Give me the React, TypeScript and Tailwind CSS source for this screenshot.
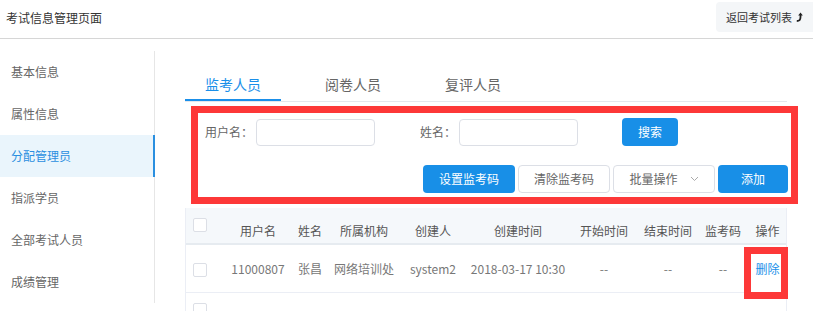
import React from "react";

const font = { fontFamily: '"Noto Sans CJK SC", "Noto Sans", sans-serif' };

const menu = ["基本信息", "属性信息", "分配管理员", "指派学员", "全部考试人员", "成绩管理"];

function Checkbox() {
  return <div className="w-[14px] h-[14px] rounded-[2px] border border-[#dcdfe6] bg-white" />;
}

const cols = "grid grid-cols-[37px_70px_34px_74px_64px_106px_66px_62px_48px_41px]";

export default function App() {
  const headers = ["用户名", "姓名", "所属机构", "创建人", "创建时间", "开始时间", "结束时间", "监考码", "操作"];
  const row = ["11000807", "张昌", "网络培训处", "system2", "2018-03-17 10:30", "--", "--", "--"];
  return (
    <div style={font} className="w-[813px] h-[311px] overflow-hidden bg-white text-[12px] relative">
      {/* header */}
      <div className="h-[39px] border-b border-[#d6d6d6] flex items-start justify-between">
        <div className="pl-[6px] pt-[10px] text-[#333] leading-[16px]">考试信息管理页面</div>
        <div className="mt-[2px] h-[30px] w-[97px] bg-[#f4f6f8] rounded-l-[4px] flex items-center pl-[10px] text-[11px] text-[#333]">
          <span>返回考试列表</span>
          <svg className="ml-[4px]" width="7" height="10" viewBox="0 0 7 10">
            <path d="M0.8 9 Q4.5 9 4.5 5 L4.5 2.5" stroke="#222" strokeWidth="1.8" fill="none" />
            <path d="M2.2 3.6 L4.5 0.6 L6.8 3.6 Z" fill="#222" />
          </svg>
        </div>
      </div>

      <div className="flex">
        {/* sidebar */}
        <div className="pt-[12px] w-[155px] shrink-0">
          <div className="border-r border-[#e6e6e6]">
            {menu.map((m, i) => (
              <div
                key={m}
                className={
                  i === 2
                    ? "h-[42px] flex items-center pl-[11px] bg-[#eaf5fc] text-[#2a8fe0] border-r-2 border-[#2a8fe0] -mr-px"
                    : "h-[42px] flex items-center pl-[11px] text-[#666]"
                }
              >
                {m}
              </div>
            ))}
          </div>
        </div>

        {/* main */}
        <div className="pl-[30px] pt-[29px] w-[632px] shrink-0">
          <div className="w-[602px] h-[34px] border-b border-[#e4e7ed] flex gap-[24px] text-[14px]">
            <div className="w-[96px] h-[33px] flex items-center justify-center text-[#1a8fe9] border-b-2 border-[#1a8fe9] pt-[2px]">监考人员</div>
            <div className="w-[96px] h-[33px] flex items-center justify-center text-[#666]">阅卷人员</div>
            <div className="w-[96px] h-[33px] flex items-center justify-center text-[#666]">复评人员</div>
          </div>

          {/* filter box */}
          <div className="mt-[4px] ml-[6px] w-[607px] h-[98px] border-[7px] border-[#fd3838] pt-[5px] pl-[7px] pr-[3px]">
            <div className="flex items-center h-[28px]">
              <span className="text-[#666] w-[51px]">用户名：</span>
              <div className="w-[119px] h-[27px] border border-[#dcdfe6] rounded-[4px]" />
              <span className="text-[#666] ml-[45px] w-[39px]">姓名：</span>
              <div className="w-[119px] h-[27px] border border-[#dcdfe6] rounded-[4px]" />
              <div className="ml-[44px] w-[56px] h-[28px] rounded-[4px] bg-[#188fe7] text-white flex items-center justify-center">搜索</div>
            </div>
            <div className="mt-[19px] flex justify-end gap-[3px]">
              <div className="w-[92px] h-[28px] rounded-[4px] bg-[#188fe7] text-white flex items-center justify-center">设置监考码</div>
              <div className="w-[92px] h-[28px] rounded-[4px] border border-[#dcdfe6] text-[#666] flex items-center justify-center">清除监考码</div>
              <div className="w-[102px] h-[28px] rounded-[4px] border border-[#dcdfe6] text-[#666] flex items-center justify-center">
                <span>批量操作</span>
                <svg className="ml-[12px]" width="9" height="6" viewBox="0 0 9 6">
                  <path d="M1 1 L4.5 4.5 L8 1" stroke="#aaa" strokeWidth="1" fill="none" />
                </svg>
              </div>
              <div className="w-[70px] h-[28px] rounded-[4px] bg-[#188fe7] text-white flex items-center justify-center">添加</div>
            </div>
          </div>

          {/* table */}
          <div className="mt-[4px] w-[602px] border-l border-r border-[#ebeef5]">
            <div className={`${cols} h-[37px] bg-[#f5f8fb] border-b-2 border-[#e6ebf0]`}>
              <div className="pl-[7px] pt-[10px]"><Checkbox /></div>
              {headers.map((h) => (
                <div key={h} className="text-center text-[#555] pt-[15px] leading-[16px] whitespace-nowrap">{h}</div>
              ))}
            </div>
            <div className={`${cols} h-[48px] border-b border-[#ebeef5] items-center`}>
              <div className="pl-[7px] pt-[3px]"><Checkbox /></div>
              {row.map((c, i) => (
                <div key={i} className="text-center text-[#777] whitespace-nowrap">{c}</div>
              ))}
              <div className="text-center text-[#1a8fe9]">删除</div>
            </div>
            <div className={`${cols} h-[40px]`}>
              <div className="pl-[7px] pt-[10px]"><Checkbox /></div>
            </div>
          </div>
        </div>
      </div>

      {/* annotation over 删除 */}
      <div className="absolute left-[744px] top-[247px] w-[44px] h-[52px] border-[7px] border-[#fd3838]" />
    </div>
  );
}
